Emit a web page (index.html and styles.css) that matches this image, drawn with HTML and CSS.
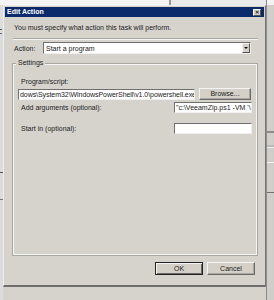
FILE: index.html
```html
<!DOCTYPE html>
<html lang="en">
<head>
    <meta charset="UTF-8">
    <title>Edit Action</title>
    <link rel="stylesheet" href="styles.css">
</head>
<body>
    <!-- Janelas atrás do diálogo -->
    <div class="desk-top"></div>
    <div class="desk-left"><span class="desk-mark"></span></div>
    <div class="desk-right"></div>

    <div class="dialog">
        <div class="titlebar">
            <span class="title">Edit Action</span>
            <span class="close">&#x2715;</span>
        </div>

        <div class="dialog-body">
            <p class="intro">You must specify what action this task will perform.</p>
            <div class="separator"></div>

            <div class="action-row">
                <span class="label">Action:</span>
                <div class="select">
                    <span class="select-text">Start a program</span>
                    <span class="select-arrow"><span class="arrow"></span></span>
                </div>
            </div>

            <fieldset class="settings">
                <legend>Settings</legend>
                <div class="label program-label">Program/script:</div>
                <div class="program-row">
                    <div class="field program-field">dows\System32\WindowsPowerShell\v1.0\powershell.exe</div>
                    <button class="btn browse">Browse...</button>
                </div>
                <div class="arg-row">
                    <span class="label">Add arguments (optional):</span>
                    <div class="field small-field">"c:\VeeamZip.ps1 -VM '\</div>
                </div>
                <div class="arg-row start-row">
                    <span class="label">Start in (optional):</span>
                    <div class="field small-field"></div>
                </div>
            </fieldset>

            <div class="buttons">
                <button class="btn ok">OK</button>
                <button class="btn">Cancel</button>
            </div>
        </div>
    </div>
</body>
</html>
```

FILE: styles.css
```css
* {
    margin: 0;
    padding: 0;
    box-sizing: border-box;
}

body {
    width: 274px;
    height: 300px;
    overflow: hidden;
    position: relative;
    background: #d6d3cd;
    font-family: 'Liberation Sans', Arial, sans-serif;
    font-size: 7px;
    color: #222;
}

/* fundo: outras janelas */
.desk-top {
    height: 5px;
    background: linear-gradient(to right, #f4f4f4 0, #f4f4f4 169px, #9a9a9a 169px, #9a9a9a 171px, #e9e9e9 171px);
}

.desk-left {
    position: absolute;
    left: 0;
    top: 5px;
    width: 3px;
    height: 295px;
    background: linear-gradient(to bottom, #dcdcdc 0, #dcdcdc 167px, #555 167px, #555 168px, #dcdcdc 168px, #dcdcdc 194px, #777 194px, #777 195px, #dcdcdc 195px);
}

.desk-mark {
    position: absolute;
    top: 24px;
    left: 0;
    width: 2px;
    height: 5px;
    border-top: 1px solid #555;
    border-bottom: 1px solid #666;
}

.desk-right {
    position: absolute;
    left: 266px;
    top: 0;
    width: 8px;
    height: 300px;
    background: linear-gradient(to bottom, #f2f2f2 0, #f2f2f2 5px, #d0cec8 5px, #d0cec8 131px, #8c8c8c 131px, #8c8c8c 133px, #d0cec8 133px, #d0cec8 145px, #b9b9b9 145px, #b9b9b9 147px, #eeeeee 147px, #eeeeee 148px, #d0cec8 148px, #d0cec8 162px, #f4f4f4 162px, #f4f4f4 163px, #d0cec8 163px, #d0cec8 192px, #707070 192px, #707070 193px, #d0cec8 193px);
    border-left: 1px solid #8d8d8d;
}

/* diálogo */
.dialog {
    position: absolute;
    left: 3px;
    top: 5px;
    width: 263px;
    height: 282px;
    background: #d6d3cd;
    border-top: 1px solid #ececec;
    border-left: 1px solid #ececec;
    border-right: 1px solid #777;
    border-bottom: 2px solid #6f6f6f;
    padding: 0 1px;
}

.titlebar {
    height: 10px;
    margin-top: 1px;
    background: #0b2a6c;
    display: flex;
    align-items: center;
    justify-content: space-between;
    padding: 0 3px 0 2px;
}

.title {
    color: #fff;
    font-weight: bold;
    font-size: 7px;
    line-height: 10px;
}

.close {
    width: 8px;
    height: 7px;
    background: #d4d0c8;
    border: 1px solid;
    border-color: #fff #555 #555 #fff;
    font-size: 5px;
    line-height: 5px;
    text-align: center;
    color: #222;
    font-weight: bold;
}

.dialog-body {
    padding: 7px 8px 0 8px;
    display: flex;
    flex-direction: column;
}

.intro {
    line-height: 8px;
    padding-left: 1px;
}

.separator {
    height: 2px;
    margin-top: 6px;
    border-top: 1px solid #a9a7a2;
    border-bottom: 1px solid #f5f5f5;
    width: 245px;
}

.action-row {
    display: flex;
    align-items: center;
    margin-top: 2px;
    height: 12px;
}

.action-row .label {
    width: 30px;
    padding-left: 1px;
}

.select {
    width: 208px;
    height: 12px;
    background: #fff;
    border: 1px solid;
    border-color: #6f6f6f #f0f0f0 #f0f0f0 #6f6f6f;
    display: flex;
    align-items: center;
    justify-content: space-between;
}

.select-text {
    padding-left: 2px;
}

.select-arrow {
    width: 8px;
    height: 10px;
    background: #d4d0c8;
    border: 1px solid;
    border-color: #f4f4f4 #555 #555 #f4f4f4;
    display: flex;
    align-items: center;
    justify-content: center;
}

.arrow {
    width: 0;
    height: 0;
    border-left: 2px solid transparent;
    border-right: 2px solid transparent;
    border-top: 2px solid #111;
}

.settings {
    margin-top: 9px;
    margin-left: -1px;
    width: 246px;
    height: 193px;
    border: none;
    box-shadow: inset 1px 1px 0 #a9a7a2, inset -1px -1px 0 #a9a7a2, inset 2px 2px 0 #f5f5f5, inset -2px -2px 0 #f5f5f5;
    padding: 0 6px;
    display: flex;
    flex-direction: column;
    position: relative;
}

.settings legend {
    position: absolute;
    top: -4px;
    left: 4px;
    padding: 0 2px;
    background: #d6d3cd;
    line-height: 8px;
}

.program-label {
    margin-top: 15px;
    padding-left: 3px;
    line-height: 8px;
}

.program-row {
    display: flex;
    align-items: center;
    gap: 4px;
    margin-top: 2px;
}

.field {
    height: 11px;
    background: #fff;
    border: 1px solid;
    border-color: #6f6f6f #f0f0f0 #f0f0f0 #6f6f6f;
    white-space: nowrap;
    overflow: hidden;
    line-height: 9px;
    padding-left: 1px;
}

.program-field {
    width: 177px;
    letter-spacing: -0.06px;
}

.btn {
    font-family: 'Liberation Sans', Arial, sans-serif;
    font-size: 7px;
    color: #222;
    background: #d4d0c8;
    border: 1px solid;
    border-color: #f4f4f4 #6a6a6a #6a6a6a #f4f4f4;
    box-shadow: inset -1px -1px 0 #a9a7a2;
    height: 12px;
    line-height: 10px;
}

.browse {
    width: 52px;
}

.arg-row {
    display: flex;
    align-items: center;
    justify-content: space-between;
    margin-top: 2px;
    padding-left: 3px;
}

.start-row {
    margin-top: 10px;
}

.small-field {
    width: 78px;
}

.buttons {
    display: flex;
    justify-content: flex-end;
    gap: 4px;
    margin-top: 6px;
    padding-right: 1px;
}

.buttons .btn {
    width: 48px;
    height: 13px;
}

.btn.ok {
    border-color: #222;
    box-shadow: inset 1px 1px 0 #f4f4f4, inset -1px -1px 0 #6a6a6a;
}
```
